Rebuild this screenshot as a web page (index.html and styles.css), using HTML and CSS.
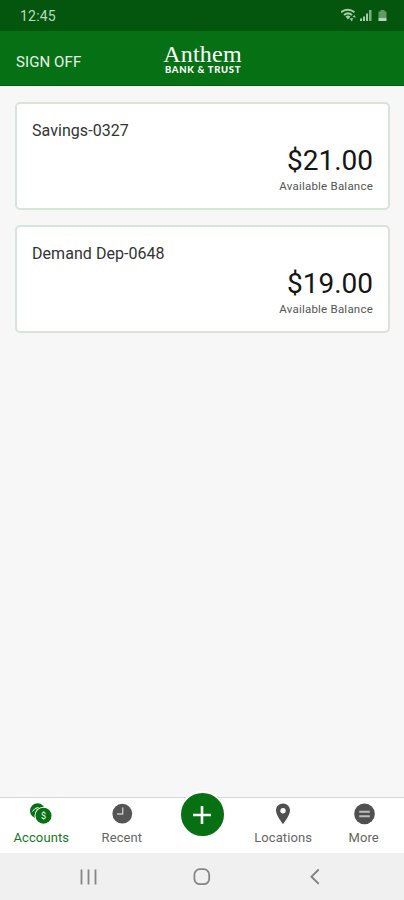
FILE: index.html
```
<!DOCTYPE html>
<html lang="en">

<head>
  <meta charset="UTF-8">
  <meta name="viewport" content="width=device-width, initial-scale=1.0">
  <title>Anthem Bank &amp; Trust</title>
  <link rel="stylesheet" href="styles.css">
</head>

<body>
  <div class="status-bar">
    <span class="time">12:45</span>
    <svg class="status-icons" width="50" height="16" viewBox="0 0 50 16">
      <!-- wifi -->
      <path d="M0 4.200Q7-.6 13.500 4.200M3 7Q7 3.800 11 7" fill="none" stroke="#a5cda5" stroke-width="2" />
      <path d="M4.500 8.500Q7 6.500 9.500 8.500L7 11.500z" fill="#a5cda5" />
      <path d="M8.500 10.500l2.500 3 1-3.500M11.500 9l1.700-2 1.800 2.500z" fill="#a5cda5" />
      <!-- signal -->
      <path d="M19 10.500h2v2.500h-2zM22 8.500h2V13h-2zM25 5.500h2V13h-2z" fill="#a5cda5" />
      <path d="M28 2h2.500v11H28z" fill="#7bb07c" />
      <!-- battery -->
      <path d="M39.500 2h4v1.500h2V10h-8V3.500h2z" fill="#639b65" />
      <path d="M37.500 10h8v3h-8z" fill="#b4d6b4" />
    </svg>
  </div>

  <header class="header">
    <a class="sign-off">SIGN OFF</a>
    <div class="logo">
      <span class="logo-name">Anthem</span>
      <span class="logo-sub">BANK &amp; TRUST</span>
    </div>
  </header>

  <main class="accounts">
    <section class="card">
      <h2 class="account-name">Savings-0327</h2>
      <p class="amount">$21.00</p>
      <p class="label">Available Balance</p>
    </section>
    <section class="card">
      <h2 class="account-name">Demand Dep-0648</h2>
      <p class="amount">$19.00</p>
      <p class="label">Available Balance</p>
    </section>
  </main>

  <nav class="tabs">
    <a class="tab active">
      <svg width="24" height="24" viewBox="0 0 24 24">
        <circle cx="8.500" cy="8.700" r="7.500" fill="#067012" />
        <path d="M3.500 9.500Q5.500 5.500 9.500 5.500" fill="none" stroke="#fff" stroke-width="1" />
        <circle cx="14.500" cy="13.700" r="9" fill="#fff" />
        <circle cx="14.500" cy="13.700" r="8" fill="#067012" />
        <text class="coin-sign" x="14.500" y="17" text-anchor="middle">$</text>
      </svg>
      <span>Accounts</span>
    </a>
    <a class="tab">
      <svg width="24" height="24" viewBox="0 0 24 24">
        <circle cx="12.300" cy="11.700" r="9.900" fill="#555" />
        <path d="M12.700 5.500V12H7" fill="none" stroke="#c4c4c4" stroke-width="1.400" />
      </svg>
      <span>Recent</span>
    </a>
    <a class="tab tab-add">
      <span class="add-button">
        <svg width="20" height="20" viewBox="0 0 20 20">
          <path d="M10 1v18M1 10h18" stroke="#fff" stroke-width="2.600" />
        </svg>
      </span>
    </a>
    <a class="tab">
      <svg width="24" height="24" viewBox="0 0 24 24">
        <path fill="#505050" fill-rule="evenodd" d="M12 1.500c-4 0-7 3-7 6.900 0 4.900 7 13.600 7 13.600s7-8.700 7-13.600c0-3.900-3-6.900-7-6.900zm0 4.500a2.700 2.700 0 1 1 0 5.400 2.700 2.700 0 0 1 0-5.400z" />
      </svg>
      <span>Locations</span>
    </a>
    <a class="tab">
      <svg width="24" height="24" viewBox="0 0 24 24">
        <circle cx="12.500" cy="11.900" r="10.300" fill="#505050" />
        <path d="M7.200 9.800h10.600M7.200 14.300h10.600" stroke="#bdbdbd" stroke-width="1.900" />
      </svg>
      <span>More</span>
    </a>
  </nav>

  <div class="system-nav">
    <svg width="18" height="18" viewBox="0 0 18 18">
      <path d="M2.500 1.500v15M9.500 1.500v15M16.500 1.500v15" stroke="#858585" stroke-width="1.800" />
    </svg>
    <svg width="18" height="18" viewBox="0 0 18 18">
      <rect x="1.400" y="1.200" width="14.800" height="15" rx="5.500" fill="none" stroke="#858585" stroke-width="1.800" />
    </svg>
    <svg width="18" height="18" viewBox="0 0 18 18">
      <path d="M12.700 1.500L5.500 8.700l7.200 7.200" fill="none" stroke="#808080" stroke-width="1.900" />
    </svg>
  </div>
</body>

</html>
```
FILE: styles.css
```
* {
  box-sizing: border-box;
}

html,
body {
  height: 100%;
}

body {
  margin: 0;
  display: flex;
  flex-direction: column;
  background-color: #f7f7f7;
  color: #222;
  font-family: Roboto, sans-serif;
}

h2,
p {
  margin: 0;
  font-weight: 400;
}

svg {
  display: block;
}

.status-bar {
  display: flex;
  justify-content: space-between;
  align-items: center;
  height: 31px;
  padding: 1px 13px 0 20px;
  background-color: #04560e;
}

.time {
  color: #b9dab9;
  font-size: 14px;
  letter-spacing: 0.2px;
}

.header {
  display: grid;
  grid-template-columns: 1fr auto 1fr;
  align-items: center;
  height: 55px;
  padding: 0 15px 0 16px;
  background-color: #067014;
  border-bottom: 1px solid #04600f;
}

.sign-off {
  padding-top: 7px;
  color: #e6f2e6;
  font-size: 15px;
  letter-spacing: 0.1px;
}

.logo {
  display: flex;
  flex-direction: column;
  align-items: center;
  padding-top: 2px;
  color: #fff;
}

.logo-name {
  font-family: "Liberation Serif", serif;
  font-size: 24px;
  line-height: 21px;
  letter-spacing: 0.2px;
}

.logo-sub {
  font-family: Lato, sans-serif;
  font-weight: 900;
  font-size: 9.5px;
  line-height: 9px;
  letter-spacing: 0.7px;
  margin-right: -1px;
}

.accounts {
  flex: 1;
  display: flex;
  flex-direction: column;
  gap: 15px;
  padding: 16px 14px 0 15px;
}

.card {
  height: 108px;
  padding: 17px 15px;
  background-color: #fff;
  border: 2px solid #d6e4da;
  border-radius: 5px;
}

.account-name {
  font-size: 16px;
  line-height: 20px;
  color: #333;
  letter-spacing: 0.05px;
}

.amount {
  margin-top: 4px;
  font-size: 28px;
  line-height: 32px;
  text-align: right;
  color: #151515;
}

.label {
  margin-top: 2px;
  font-size: 11.5px;
  line-height: 14px;
  text-align: right;
  color: #555;
  letter-spacing: 0.22px;
}

.tabs {
  display: grid;
  grid-template-columns: repeat(5, 1fr);
  height: 56px;
  padding-left: 1px;
  background-color: #fff;
  border-top: 1px solid #d4d4d4;
}

.tab {
  display: flex;
  flex-direction: column;
  align-items: center;
  padding-top: 4px;
  color: #666;
  font-size: 13px;
  line-height: 16px;
  letter-spacing: 0.1px;
}

.tab span {
  margin-top: 4px;
}

.active {
  color: #1c7525;
}

.coin-sign {
  fill: #fff;
  font-size: 9px;
  letter-spacing: 0;
}

.tab-add {
  padding-top: 0;
}

.tab .add-button {
  display: flex;
  align-items: center;
  justify-content: center;
  width: 47px;
  height: 47px;
  margin-top: -7px;
  border: 2px solid #fff;
  border-radius: 50%;
  background-color: #067012;
}

.system-nav {
  display: flex;
  justify-content: space-between;
  align-items: center;
  height: 47px;
  padding: 0 80px 0 79px;
  background-color: #f0f0f0;
}
```
